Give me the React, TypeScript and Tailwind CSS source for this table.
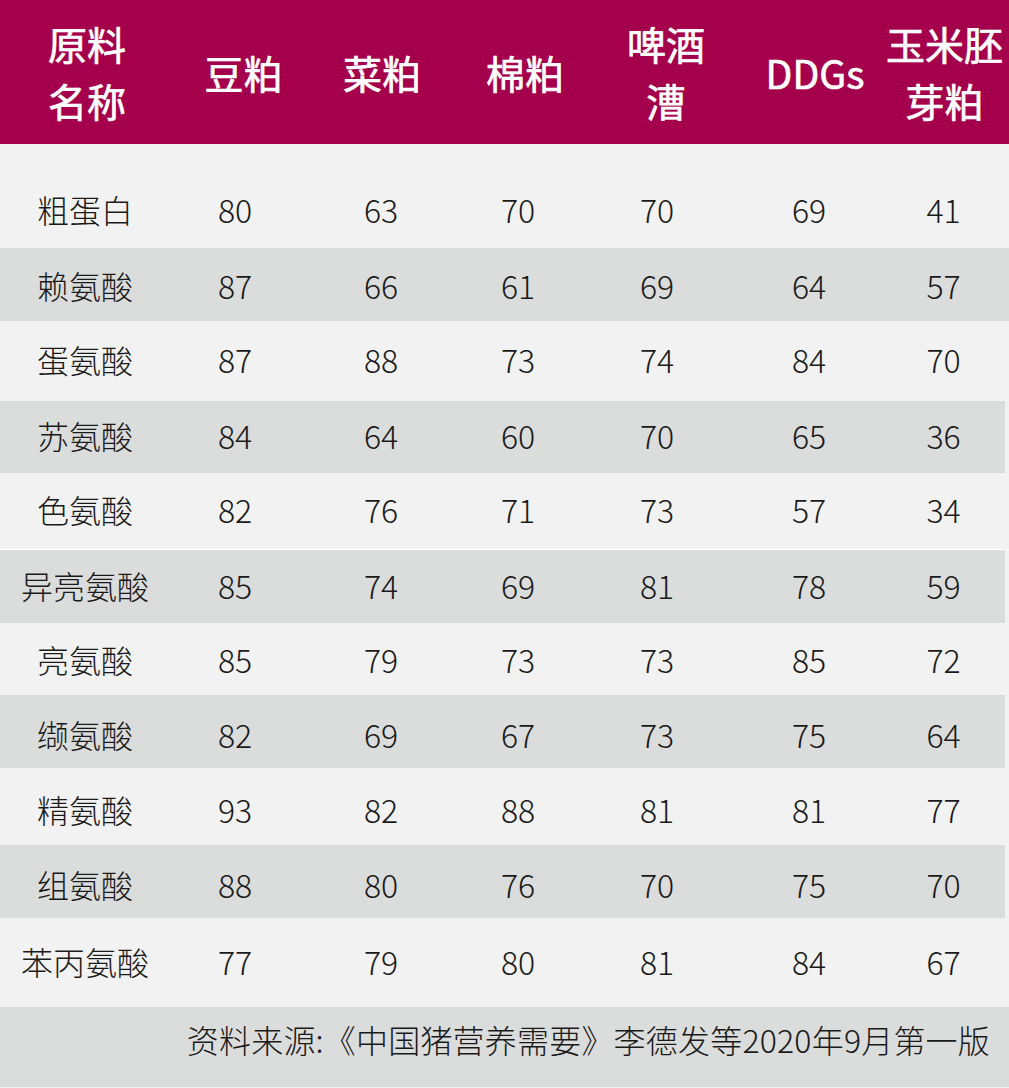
const font = { fontFamily: '"Noto Sans CJK SC", "Noto Sans", sans-serif' };

const headers = [
  { lines: ['原料', '名称'], cls: 'w-[170px] pl-[4px]' },
  { lines: ['豆粕'], cls: 'w-[130px] pl-[17px]' },
  { lines: ['菜粕'], cls: 'w-[162px] pl-[2px]' },
  { lines: ['棉粕'], cls: 'w-[112px] pl-[14px]' },
  { lines: ['啤酒', '漕'], cls: 'w-[166px] pl-[18px]' },
  { lines: ['DDGs'], cls: 'w-[138px] pl-[12px]' },
  { lines: ['玉米胚', '芽粕'], cls: 'w-[131px] pl-[2px]' },
];

const colWidths = ['w-[170px]', 'w-[130px]', 'w-[162px]', 'w-[112px]', 'w-[166px]', 'w-[138px]', 'w-[131px]'];

const rows = [
  { name: '粗蛋白', values: [80, 63, 70, 70, 69, 41], h: 'h-[74px]', dark: false },
  { name: '赖氨酸', values: [87, 66, 61, 69, 64, 57], h: 'h-[73px] pt-[5px]', dark: true },
  { name: '蛋氨酸', values: [87, 88, 73, 74, 84, 70], h: 'h-[80px]', dark: false },
  { name: '苏氨酸', values: [84, 64, 60, 70, 65, 36], h: 'h-[72px] mr-[4px]', dark: true },
  { name: '色氨酸', values: [82, 76, 71, 73, 57, 34], h: 'h-[77px] border-b border-white', dark: false },
  { name: '异亮氨酸', values: [85, 74, 69, 81, 78, 59], h: 'h-[73px] mr-[4px]', dark: true },
  { name: '亮氨酸', values: [85, 79, 73, 73, 85, 72], h: 'h-[72px] pt-[3px]', dark: false },
  { name: '缬氨酸', values: [82, 69, 67, 73, 75, 64], h: 'h-[73px] pt-[8px] mr-[4px]', dark: true },
  { name: '精氨酸', values: [93, 82, 88, 81, 81, 77], h: 'h-[77px] pt-[8px]', dark: false },
  { name: '组氨酸', values: [88, 80, 76, 70, 75, 70], h: 'h-[73px] pt-[9px] mr-[4px]', dark: true },
  { name: '苯丙氨酸', values: [77, 79, 80, 81, 84, 67], h: 'h-[89px]', dark: false },
];

export default function App() {
  return (
    <div className="w-[1009px] h-[1088px] bg-[#f2f2f2] flex flex-col overflow-hidden" style={font}>
      {/* header */}
      <div className="h-[144px] shrink-0 bg-[#a4004b] flex items-center text-white">
        {headers.map((hd, i) => (
          <div
            key={i}
            className={`${hd.cls} shrink-0 flex flex-col items-center text-[39px] leading-[57px] font-normal [-webkit-text-stroke:0.7px_white]`}
          >
            {hd.lines.map((l) => (
              <div key={l} className="whitespace-nowrap">{l}</div>
            ))}
          </div>
        ))}
      </div>

      {/* body */}
      <div className="h-[30px] shrink-0" />
      {rows.map((r) => (
        <div
          key={r.name}
          className={`${r.h} shrink-0 pb-[4px] flex items-center box-border ${r.dark ? 'bg-[#dbdcdc]' : 'bg-[#f2f2f2]'}`}
        >
          <div className={`${colWidths[0]} shrink-0 text-center text-[32px] leading-[36px] text-[#1a1a1a] font-light whitespace-nowrap`}>
            {r.name}
          </div>
          {r.values.map((v, j) => (
            <div
              key={j}
              className={`${colWidths[j + 1]} shrink-0 text-center text-[32px] leading-[36px] text-[#1a1a1a] font-light`}
            >
              {v}
            </div>
          ))}
        </div>
      ))}

      {/* footer */}
      <div className="h-[80px] shrink-0 bg-[#dbdcdc] flex justify-end items-start pt-[15px] pr-[19px]">
        <div className="text-[32px] leading-[34px] text-[#1a1a1a] font-light whitespace-nowrap tracking-[0.2px]">
          资料来源:《中国猪营养需要》李德发等2020年9月第一版
        </div>
      </div>
    </div>
  );
}
